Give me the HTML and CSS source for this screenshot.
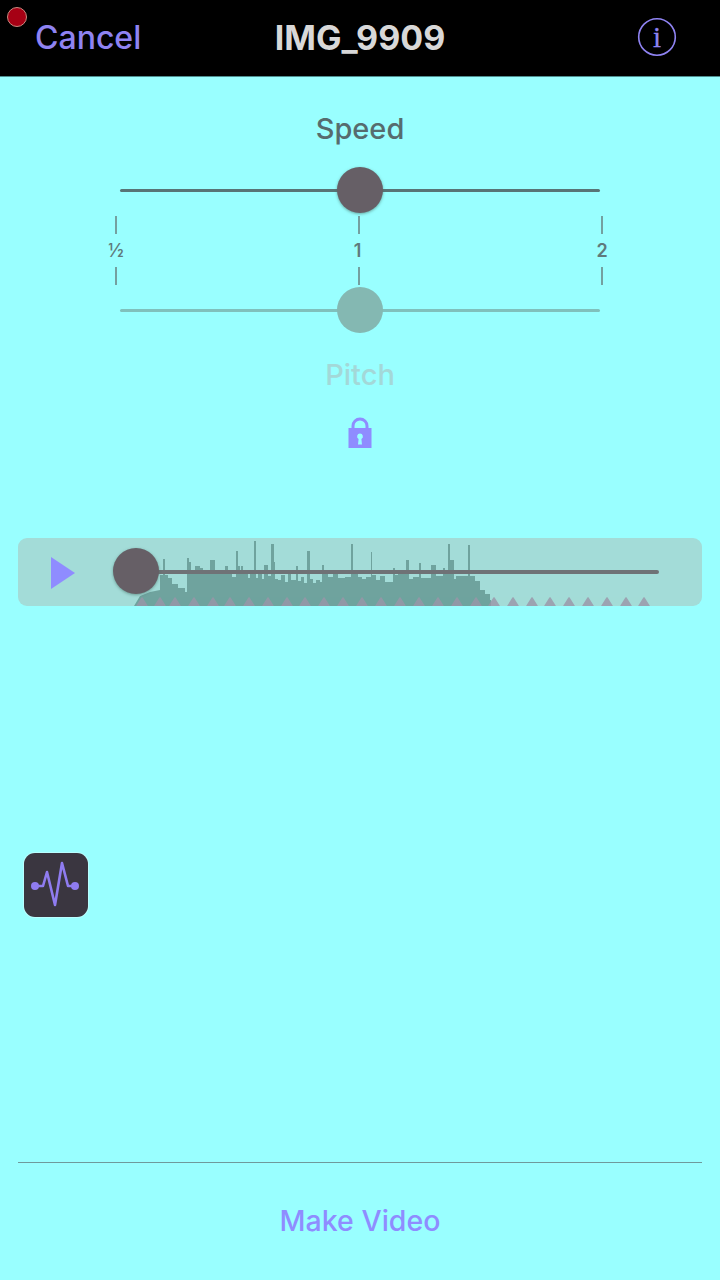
FILE: index.html
```html
<!DOCTYPE html>
<html>
<head>
    <meta http-equiv="Content-Type" content="text/html; charset=UTF-8">
    <title>IMG_9909</title>
    <link rel="stylesheet" href="styles.css">
</head>

<body>
<div id="screen">
    <div class="rec-dot"></div>
    <div class="topbar">
        <span class="cancel">Cancel</span>
        <span class="title">IMG_9909</span>
        <svg class="info" width="40" height="40" viewBox="0 0 40 40">
            <circle cx="20" cy="20" r="18.300" fill="none" stroke="#8f83f2" stroke-width="1.600"/>
            <text x="20" y="29.500" text-anchor="middle" font-family="Liberation Serif" font-size="29" fill="#8f83f2" stroke="#8f83f2" stroke-width="0.300">i</text>
        </svg>
    </div>

    <div class="rates">
        <div class="rate-label">Speed</div>
        <div class="slider">
            <div class="track"></div>
            <div class="thumb"></div>
        </div>
        <div class="ticks">
            <div class="tick-col"><i></i><b class="half">½</b><i></i></div>
            <div class="tick-col"><i></i><b class="one">1</b><i></i></div>
            <div class="tick-col"><i></i><b>2</b><i></i></div>
        </div>
        <div class="slider off">
            <div class="track"></div>
            <div class="thumb"></div>
        </div>
        <div class="rate-label pitch">Pitch</div>
        <svg class="lock" width="26" height="32" viewBox="0 0 26 32">
            <path d="M6 13V9a7 7 0 0 1 14 0v4" fill="none" stroke="#8f8cff" stroke-width="3"/>
            <path fill-rule="evenodd" fill="#8f8cff" d="M1.500 11h23v20h-23zM13 16.500a3 3 0 0 0-1.400 5.600l-.6 5.400h4l-.6-5.400a3 3 0 0 0-1.400-5.600z"/>
        </svg>
    </div>

    <div class="player">
        <svg class="play" width="26" height="34" viewBox="0 0 26 34">
            <polygon points="1,1 25,17 1,33" fill="#8f8cff"/>
        </svg>
        <svg class="wave" width="684" height="68" viewBox="18 538 684 68">
            <path fill="#6fa39e" d="M134 606L140 596L150 592L160 590V575H163V559H165V575H168V578H172V584H178V588H185V592H187V558H189V562H191V570H194V573H195V566H200V568H203V573H210V560H215V570H225V566H228V572H232V577H236V551H238V566H240V570H241V566H243V573H248V578H250V574H254V541H256V578H258V574H262V579H264V565H268V576H271V544H274V562H275V579H278V580H281V575H285V582H288V574H291V580H296V566H298V581H301V577H304V583H307V551H310V579H313V583H316V580H320V582H322V565H324V574H328V577H333V574H338V578H345V577H351V544H353V572H358V577H362V579H366V577H371V552H372V575H376V580H380V576H385V582H393V568H395V575H398V573H406V560H409V579H413V577H419V563H421V578H431V565H436V576H443V568H445V574H448V544H450V560H454V579H456V576H468V545H470V576H475V581H480V590H485V594H490V600H491V606Z"/>
            <path fill="#9a95a8" stroke="#9a95a8" stroke-width="1.500" stroke-linejoin="round" opacity="0.800" d="M137 606l5-8 5 8zM155 606l5-8 5 8zM170 606l5-8 5 8zM189 606l5-8 5 8zM208 606l5-8 5 8zM225 606l5-8 5 8zM244 606l5-8 5 8zM263 606l5-8 5 8zM282 606l5-8 5 8zM300 606l5-8 5 8zM319 606l5-8 5 8zM338 606l5-8 5 8zM357 606l5-8 5 8zM376 606l5-8 5 8zM395 606l5-8 5 8zM414 606l5-8 5 8zM433 606l5-8 5 8zM452 606l5-8 5 8zM471 606l5-8 5 8zM489 606l5-8 5 8zM508 606l5-8 5 8zM527 606l5-8 5 8zM545 606l5-8 5 8zM564 606l5-8 5 8zM583 606l5-8 5 8zM602 606l5-8 5 8zM621 606l5-8 5 8zM639 606l5-8 5 8z"/>
        </svg>
        <div class="scrub"></div>
        <div class="scrub-thumb"></div>
    </div>

    <div class="side-btn">
        <svg width="64" height="64" viewBox="0 0 64 64">
            <path d="M11 33H19L23 19L31 52L38 10L44 33H51" fill="none" stroke="#8f7cf0" stroke-width="2.600" stroke-linejoin="round"/>
            <circle cx="11" cy="33" r="4" fill="#8f7cf0"/>
            <circle cx="51" cy="33" r="4" fill="#8f7cf0"/>
        </svg>
    </div>

    <div class="bottom">
        <div class="rule"></div>
        <div class="make">Make Video</div>
    </div>
</div>
</body>
</html>
```
FILE: styles.css
```css
html, body {
    margin: 0;
    padding: 0;
}

#screen {
    position: relative;
    width: 720px;
    height: 1280px;
    display: flex;
    flex-direction: column;
    overflow: hidden;
    background-color: #99ffff;
    font-family: Inter, "Liberation Sans", Arial, Helvetica, sans-serif;
}

.rec-dot {
    position: absolute;
    left: 7px;
    top: 7px;
    width: 20px;
    height: 20px;
    box-sizing: border-box;
    border-radius: 50%;
    background-color: #a60014;
    border: 1px solid #c98a80;
}

.topbar {
    height: 77px;
    flex: none;
    display: grid;
    grid-template-columns: 1fr auto 1fr;
    align-items: center;
    padding: 0 35px 2px 35px;
    box-sizing: border-box;
    background-color: #000000;
    border-bottom: 1px solid #4f8f90;
}

.cancel {
    font-size: 32px;
    font-weight: 500;
    color: #8f83f2;
}

.title {
    font-size: 34px;
    font-weight: 700;
    color: #d8d8d8;
}

.info {
    justify-self: end;
    margin-right: 8px;
}

.rates {
    flex: none;
    display: flex;
    flex-direction: column;
    align-items: center;
    height: 461px;
}

.rate-label {
    margin-top: 35px;
    height: 34px;
    line-height: 34px;
    font-size: 29px;
    font-weight: 500;
    color: #566c6e;
}

.pitch {
    margin-top: 25px;
    color: #a3d8d8;
}

.slider {
    position: relative;
    width: 480px;
    height: 48px;
    margin-top: 19px;
}

.off {
    margin-top: 0;
}

.track {
    position: absolute;
    left: 0;
    right: 0;
    top: 24px;
    height: 3px;
    border-radius: 2px;
    background-color: #587476;
}

.thumb {
    position: absolute;
    left: 217px;
    top: 2px;
    width: 46px;
    height: 46px;
    border-radius: 50%;
    background-color: #665f66;
    box-shadow: 0 1px 3px rgba(70, 110, 100, 0.6);
}

.off .track {
    background-color: #80c0bc;
}

.off .thumb {
    background-color: #84b8b2;
    box-shadow: none;
}

.ticks {
    display: flex;
    justify-content: space-between;
    width: 488px;
    height: 69px;
    margin-top: 3px;
    margin-left: -2px;
}

.tick-col {
    width: 2px;
    display: flex;
    flex-direction: column;
    align-items: center;
    justify-content: space-between;
}

.tick-col i {
    display: block;
    width: 2px;
    height: 18px;
    background-color: #74a0a0;
}

.tick-col b {
    font-size: 18px;
    line-height: 20px;
    font-weight: 600;
    color: #5f7a7c;
}

.tick-col b.half {
    font-weight: 500;
}

.tick-col b.one {
    margin-left: -3px;
}

.lock {
    margin-top: 25px;
}

.player {
    position: relative;
    flex: none;
    height: 68px;
    margin: 0 18px;
    border-radius: 9px;
    background-color: #a3dcd8;
    overflow: hidden;
}

.play {
    position: absolute;
    left: 32px;
    top: 18px;
}

.wave {
    position: absolute;
    left: 0;
    top: 0;
}

.scrub {
    position: absolute;
    left: 130px;
    top: 32px;
    width: 511px;
    height: 4px;
    border-radius: 2px;
    background-color: #6f7276;
}

.scrub-thumb {
    position: absolute;
    left: 95px;
    top: 10px;
    width: 46px;
    height: 46px;
    border-radius: 50%;
    background-color: #665f66;
    box-shadow: 0 1px 3px rgba(70, 110, 100, 0.6);
}

.side-btn {
    width: 64px;
    height: 64px;
    flex: none;
    margin: 247px 0 0 24px;
    border-radius: 11px;
    background-color: #3a3640;
    box-shadow: 0 0 0 1px #ffffff50;
}

.side-btn svg {
    display: block;
}

.bottom {
    flex: 1;
    display: flex;
    flex-direction: column;
    margin-top: 245px;
}

.rule {
    height: 1px;
    margin: 0 18px;
    background-color: #6f9a9c;
}

.make {
    margin-top: 41px;
    text-align: center;
    font-size: 28.500px;
    font-weight: 500;
    line-height: 34px;
    color: #8f8cff;
}
```
